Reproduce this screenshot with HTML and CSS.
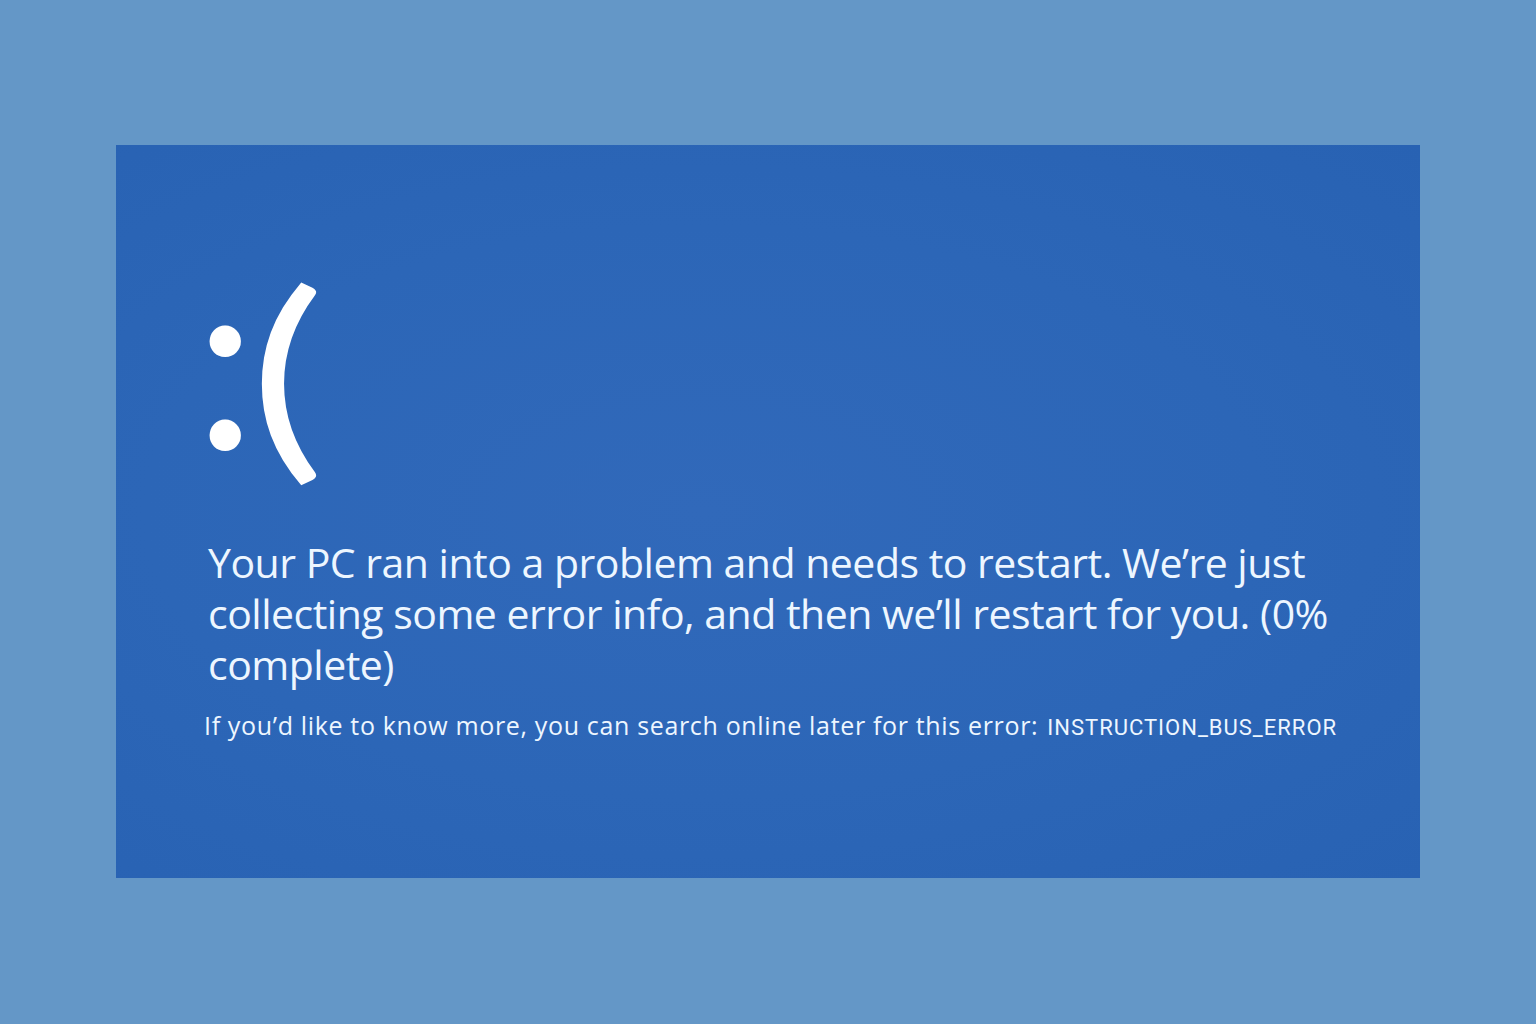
FILE: index.html
```html
<!DOCTYPE html>
<html lang="en">
<head>
  <meta charset="UTF-8" />
  <meta name="viewport" content="width=device-width, initial-scale=1.0" />
  <title>Your PC ran into a problem</title>
  <link rel="stylesheet" href="styles.css">
</head>
<body>
  <div class="screen">
    <div class="face"><span class="eyes">:</span><span class="mouth">(</span></div>
    <p class="message">Your PC ran into a problem and needs to restart. We’re just<br>collecting some error info, and then we’ll restart for you. (0%<br>complete)</p>
    <p class="more">If you’d like to know more, you can search online later for this error:<span class="code">INSTRUCTION_BUS_ERROR</span></p>
  </div>
</body>
</html>
```

FILE: styles.css
```css
body {
  margin: 0;
  background: #6497c7;
  font-family: "Open Sans", "Noto Sans", sans-serif;
}
.screen {
  box-sizing: border-box;
  width: 1304px;
  height: 733px;
  margin: 145px 0 0 116px;
  padding: 82px 0 0 92px;
  background: radial-gradient(ellipse at 45% 50%, #3169ba 0%, #2c66b7 55%, #2862b3 100%);
  color: #edf6ff;
  display: flex;
  flex-direction: column;
}
.face {
  display: flex;
  align-items: flex-start;
  height: 310px;
  margin-left: -14px;
  font-family: "Lato", sans-serif;
  font-weight: 400;
  color: #fff;
}
.eyes {
  font-size: 250px;
  line-height: 1;
  letter-spacing: -8px;
}
.mouth {
  display: inline-block;
  margin-top: 31px;
  font-size: 220px;
  line-height: 1;
  transform: scaleX(1.3);
  transform-origin: left top;
}
.message {
  margin: 0;
  font-size: 41px;
  line-height: 51px;
  letter-spacing: -0.5px;
}
.more {
  margin: 18px 0 0 -4px;
  font-size: 25px;
  letter-spacing: 0.66px;
}
.code {
  font-family: "Roboto", "Liberation Sans", sans-serif;
  font-size: 22px;
  letter-spacing: 1px;
  margin-left: 9px;
}
```
